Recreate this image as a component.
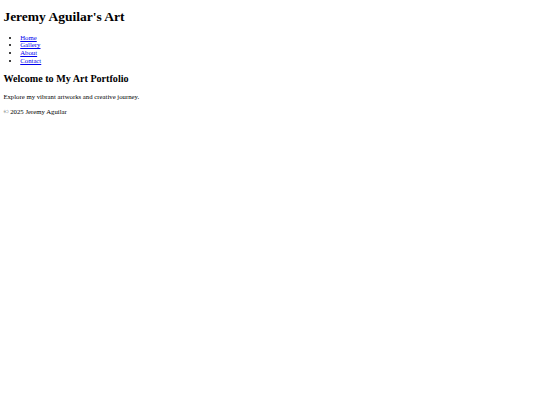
export default function App() {
  return (
    <div
      className="m-[3.375px] leading-[7.76px] text-black text-[6.75px]"
      style={{ fontFamily: '"Liberation Serif", "Times New Roman", serif' }}
    >
      <header>
        <h1 className="text-[13.5px] leading-[15.52px] font-bold my-[9.05px]">Jeremy Aguilar's Art</h1>
        <nav>
          <ul className="list-disc my-[6.75px] pl-[16.875px]">
            <li>
              <a href="#home" className="text-[#0000ee] underline">Home</a>
            </li>
            <li>
              <a href="#gallery" className="text-[#0000ee] underline">Gallery</a>
            </li>
            <li>
              <a href="#about" className="text-[#0000ee] underline">About</a>
            </li>
            <li>
              <a href="#contact" className="text-[#0000ee] underline">Contact</a>
            </li>
          </ul>
        </nav>
      </header>
      <main>
        <section>
          <h2 className="text-[10.125px] leading-[11.64px] font-bold my-[8.4px]">Welcome to My Art Portfolio</h2>
          <p className="my-[6.75px]">Explore my vibrant artworks and creative journey.</p>
        </section>
      </main>
      <footer>
        <p className="my-[6.75px]">© 2025 Jeremy Aguilar</p>
      </footer>
    </div>
  )
}
